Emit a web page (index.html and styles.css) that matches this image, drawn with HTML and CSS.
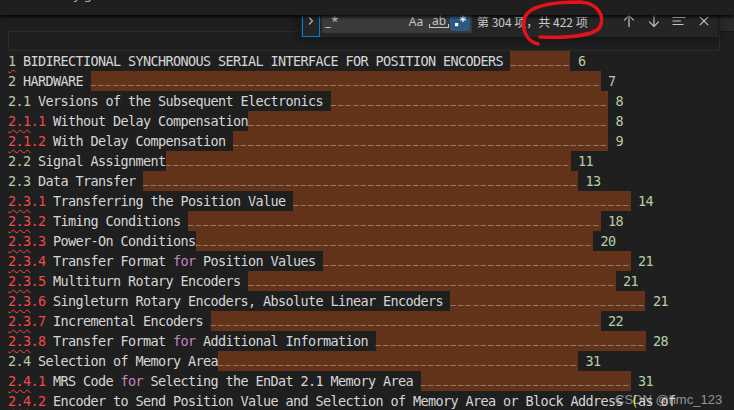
FILE: index.html
```html
<!DOCTYPE html>
<html>
<head>
<meta charset="utf-8">
<link rel="stylesheet" href="styles.css">
</head>
<body>
<div class="crumbs"><span>2     ry g</span></div>
<div class="editor">
<div class="ln cur"></div>
<div class="ln"><span class="g sq">1</span> BIDIRECTIONAL SYNCHRONOUS SERIAL INTERFACE FOR POSITION ENCODERS <span class="m">________</span> <span class="g">6</span></div>
<div class="ln"><span class="g">2</span> HARDWARE <span class="m">____________________________________________________________________</span> <span class="g">7</span></div>
<div class="ln"><span class="g">2.1</span> Versions of the Subsequent Electronics <span class="m">_____________________________________</span> <span class="g">8</span></div>
<div class="ln"><span class="r"><span class="sq">2.1</span>.1</span> Without Delay Compensation<span class="m">________________________________________________</span> <span class="g">8</span></div>
<div class="ln"><span class="r"><span class="sq">2.1</span>.2</span> With Delay Compensation <span class="m">__________________________________________________</span> <span class="g">9</span></div>
<div class="ln"><span class="g">2.2</span> Signal Assignment<span class="m">______________________________________________________</span> <span class="g">11</span></div>
<div class="ln"><span class="g">2.3</span> Data Transfer <span class="m">__________________________________________________________</span> <span class="g">13</span></div>
<div class="ln"><span class="r"><span class="sq">2.3</span>.1</span> Transferring the Position Value <span class="m">_____________________________________________</span> <span class="g">14</span></div>
<div class="ln"><span class="r"><span class="sq">2.3</span>.2</span> Timing Conditions <span class="m">_______________________________________________________</span> <span class="g">18</span></div>
<div class="ln"><span class="r"><span class="sq">2.3</span>.3</span> Power-On Conditions<span class="m">_____________________________________________________</span> <span class="g">20</span></div>
<div class="ln"><span class="r"><span class="sq">2.3</span>.4</span> Transfer Format <span class="k">for</span> Position Values <span class="m">_________________________________________</span> <span class="g">21</span></div>
<div class="ln"><span class="r"><span class="sq">2.3</span>.5</span> Multiturn Rotary Encoders <span class="m">_________________________________________________</span> <span class="g">21</span></div>
<div class="ln"><span class="r"><span class="sq">2.3</span>.6</span> Singleturn Rotary Encoders, Absolute Linear Encoders <span class="m">__________________________</span> <span class="g">21</span></div>
<div class="ln"><span class="r"><span class="sq">2.3</span>.7</span> Incremental Encoders <span class="m">____________________________________________________</span> <span class="g">22</span></div>
<div class="ln"><span class="r"><span class="sq">2.3</span>.8</span> Transfer Format <span class="k">for</span> Additional Information <span class="m">____________________________________</span> <span class="g">28</span></div>
<div class="ln"><span class="g">2.4</span> Selection of Memory Area<span class="m">________________________________________________</span> <span class="g">31</span></div>
<div class="ln"><span class="r"><span class="sq">2.4</span>.1</span> MRS Code <span class="k">for</span> Selecting the EnDat 2.1 Memory Area <span class="m">____________________________</span> <span class="g">31</span></div>
<div class="ln"><span class="r"><span class="sq">2.4</span>.2</span> Encoder to Send Position Value and Selection of Memory Area or Block Address <span class="y">(</span>as of</div>
</div>

<div class="scrolltop"></div>

<div class="find">
  <div class="toggle"><svg viewBox="0 0 16 16"><path d="M6 4.5l3.5 3.5-3.5 3.5"/></svg></div>
  <div class="input">
    <span class="q">_*</span>
    <span class="opt aa">Aa</span>
    <span class="opt ab"><span>ab</span></span>
    <span class="opt on"><svg viewBox="0 0 16 16"><rect x="3" y="10" width="3.2" height="3.2" class="fill"/><path d="M11 2.5v6.5M8.2 4.2l5.6 3.1M13.8 4.2l-5.6 3.1" class="ast"/></svg></span>
  </div>
  <span class="count">第 304 项，共 422 项</span>
  <div class="btns">
    <span class="btn"><svg viewBox="0 0 16 16"><path d="M8 14V2.5M3.2 7.3L8 2.5l4.8 4.8"/></svg></span>
    <span class="btn"><svg viewBox="0 0 16 16"><path d="M8 2v11.5M3.2 8.7L8 13.5l4.8-4.8"/></svg></span>
    <span class="btn"><svg viewBox="0 0 16 16"><path d="M1.5 4.5h13M1.5 8h8.5M1.5 11.5h11"/></svg></span>
    <span class="btn"><svg viewBox="0 0 16 16"><path d="M3.8 3.8l8.4 8.4M12.2 3.8l-8.4 8.4"/></svg></span>
  </div>
</div>

<svg class="mark" viewBox="0 0 734 410"><path d="M538 44C526 41 521 29 525 17C530 5 556 2 580 2C598 3 605 16 600 27C594 36 566 38 540 37"/></svg>

<div class="wm">CSDN @hmc_123</div>
</body>
</html>
```

FILE: styles.css
```css
* { box-sizing: border-box; }
html, body { margin: 0; padding: 0; }
body {
  width: 734px;
  height: 410px;
  overflow: hidden;
  background: #1f1f1f;
  position: relative;
  font-family: "DejaVu Sans Mono", monospace;
}

.crumbs {
  height: 15px;
  overflow: hidden;
  position: relative;
  z-index: 1;
  background: #1f1f1f;
  box-shadow: 0 2px 3px rgba(0, 0, 0, 0.85);
  font: 13px "Noto Sans", sans-serif;
  color: #a9a9a9;
}
.crumbs span {
  display: block;
  margin-top: -15px;
  padding-left: 44px;
  white-space: pre;
}

.editor {
  padding: 16px 0 0 8px;
  font-size: 13.5px;
  letter-spacing: -0.628px;
  color: #d6d6d6;
}
.ln {
  height: 20px;
  line-height: 20px;
  white-space: pre;
}
.cur {
  border: 1px solid #2c2c2c;
  margin-right: 14px;
}
.g { color: #b5cea8; }
.r { color: #f44747; }
.k { color: #c586c0; }
.y { color: #ffd700; }
.sq {
  text-decoration: underline wavy #f44747;
  text-decoration-thickness: 1px;
  text-underline-offset: 3px;
}
.m {
  display: inline-block;
  height: 20px;
  vertical-align: top;
  background: #623318;
  font-size: 9px;
  letter-spacing: 2.0815px;
  line-height: 20px;
  color: #dcdcdc;
}

.scrolltop {
  position: absolute;
  left: 719px;
  top: 5px;
  width: 15px;
  height: 27px;
  background: #2a2a2a;
  border-bottom: 1px solid #171717;
}

.find {
  position: absolute;
  left: 299px;
  top: 5px;
  width: 419px;
  height: 32px;
  background: #252526;
  border-left: 2px solid #1a1a1a;
  box-shadow: 0 0 8px 2px rgba(0, 0, 0, 0.36);
  display: flex;
  align-items: center;
  font-family: "Noto Sans", "Noto Sans CJK SC", sans-serif;
  color: #cccccc;
}
.toggle {
  width: 18px;
  height: 32px;
  margin-left: 1px;
  border: 1px solid #007fd4;
  display: flex;
  align-items: center;
  justify-content: center;
}
.toggle svg { width: 16px; height: 16px; fill: none; stroke: #b8b8b8; stroke-width: 1.1; }

.input {
  width: 150px;
  height: 24px;
  margin-left: 2px;
  background: #3a3a3a;
  display: flex;
  align-items: center;
  padding: 0 2px 0 3px;
}
.q {
  flex: 1;
  font-size: 13px;
  color: #cccccc;
  letter-spacing: 0.5px;
}
.opt {
  width: 20px;
  height: 20px;
  display: flex;
  align-items: center;
  justify-content: center;
  font-size: 12px;
  color: #c5c5c5;
  border-radius: 3px;
}
.aa { margin-right: 3px; }
.ab { margin-right: 1px; }
.ab span {
  line-height: 11px;
  padding: 0 2px;
  border: 1px solid #c5c5c5;
  border-top: none;
  height: 13px;
  display: block;
  border-image: linear-gradient(to bottom, transparent 70%, #c5c5c5 70%) 1;
}
.on { background: #2b5a80; }
.on svg { width: 16px; height: 16px; }
.on .fill { fill: #ffffff; }
.on .ast { fill: none; stroke: #ffffff; stroke-width: 1.3; }

.count {
  margin-left: 5px;
  font-family: "Noto Sans CJK SC", sans-serif;
  font-size: 12px;
  color: #cccccc;
  white-space: nowrap;
}
.btns {
  margin-left: auto;
  padding-right: 4px;
  display: flex;
  gap: 5px;
}
.btn {
  width: 20px;
  height: 20px;
  display: flex;
  align-items: center;
  justify-content: center;
}
.btn svg { width: 16px; height: 16px; fill: none; stroke: #c5c5c5; stroke-width: 1.2; }

.mark {
  position: absolute;
  left: 0;
  top: 0;
  z-index: 5;
  width: 734px;
  height: 410px;
  pointer-events: none;
}
.mark path {
  fill: none;
  stroke: #e5121b;
  stroke-width: 3.5;
  stroke-linecap: round;
  stroke-linejoin: round;
}

.wm {
  position: absolute;
  left: 615px;
  top: 392px;
  font: 13px "Liberation Sans", sans-serif;
  color: rgba(225, 225, 225, 0.6);
  white-space: nowrap;
}
```
